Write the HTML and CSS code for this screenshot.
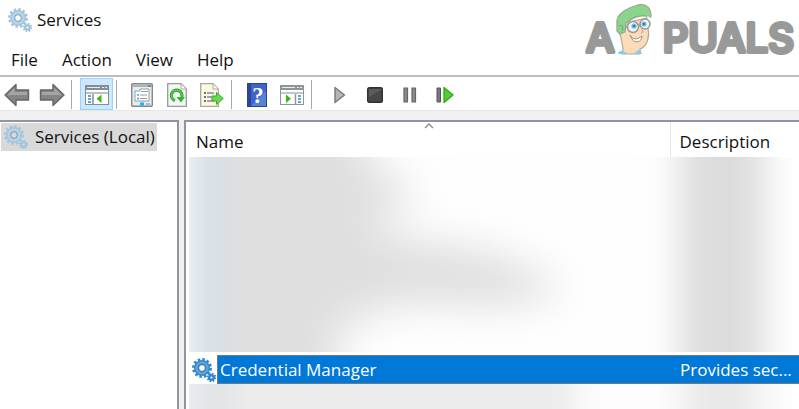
FILE: index.html
```html
<!DOCTYPE html>
<html lang="en">

<head>
    <meta charset="UTF-8">
    <meta name="viewport" content="width=device-width, initial-scale=1">
    <title>Services</title>
    <link rel="stylesheet" href="styles.css">
</head>

<body>
    <svg class="sprite" aria-hidden="true">
        <symbol id="gears" viewBox="0 0 24 24">
            <circle cx="10" cy="10" r="8.500" fill="none" stroke="currentColor" stroke-width="3" stroke-dasharray="2.5 1.95" />
            <circle cx="10" cy="10" r="5.500" fill="none" stroke="currentColor" stroke-width="5" />
            <circle class="gear-shine" cx="10" cy="10" r="5.500" fill="none" stroke-width="2" />
            <circle class="gear-rim" cx="10" cy="10" r="3.200" fill="none" stroke-width="1" />
            <circle cx="19.500" cy="19.500" r="3.800" fill="none" stroke="currentColor" stroke-width="2" stroke-dasharray="1.5 1.48" />
            <circle cx="19.500" cy="19.500" r="2.300" fill="none" stroke="currentColor" stroke-width="2.500" />
        </symbol>
    </svg>

    <div class="window">
        <header class="titlebar">
            <svg class="gears gears-pale" aria-hidden="true"><use href="#gears" /></svg>
            <h1>Services</h1>
            <svg class="watermark" viewBox="0 0 212 62" role="img" aria-label="Appuals">
                <text x="1" y="48">A</text>
                <g transform="translate(30 0)">
                    <path d="M5 29 L8 44 L7 50 H25 L25 45 C31 43 35 35 33 24 L32 14 L10 19 Z" fill="#fbdcb8" stroke="#b4a596" stroke-width="1.2" />
                    <path d="M3 50 C3 48 6 46 8 47 L13 50 Z M18 50 L25 45 L27 50 Z" fill="#86cbe8" />
                    <path d="M2 19 C1 11 10 5 20 2 C28 -1 36 1 36 12 L35 15 L31 12 C25 11 17 14 11 19 L10 28 L5 30 L2 27 Z" fill="#88d58b" stroke="#9aa794" stroke-width="1.3" stroke-linejoin="round" />
                    <path d="M32 12 L36 14 L34 20 Z" fill="#fff" />
                    <path d="M4 22 C7 20 9 23 7 27" fill="none" stroke="#739f75" />
                    <circle cx="18" cy="23" r="5.5" fill="#eef9ff" stroke="#999" stroke-width="1.5" />
                    <circle cx="30" cy="20" r="5" fill="#eef9ff" stroke="#999" stroke-width="1.5" />
                    <path d="M10 23 L13 23 M23 22 L26 21" stroke="#999" stroke-width="1.5" />
                    <circle cx="19" cy="22" r="2.6" fill="#69bce0" />
                    <circle cx="29" cy="20" r="2.6" fill="#69bce0" />
                    <circle cx="19" cy="22" r="1" fill="#556" />
                    <circle cx="29" cy="20" r="1" fill="#556" />
                    <path d="M26 25 C28 27 29 28 26 29" fill="none" stroke="#b99779" />
                    <path d="M15 31 C18 36 22 36 27 32 C27 38 20 40 17 35 Z" fill="#fff" stroke="#a38f82" />
                </g>
                <text x="209" y="48" text-anchor="end">PUALS</text>
            </svg>
        </header>

        <nav class="menubar" aria-label="Menu">
            <button type="button">File</button>
            <button type="button">Action</button>
            <button type="button">View</button>
            <button type="button">Help</button>
        </nav>

        <div class="toolbar" role="toolbar" aria-label="Tools">
            <button type="button" aria-label="Back">
                <svg width="26" height="24" viewBox="0 0 26 24"><path d="M1 12 L12 1.500 V7 H24.500 V17 H12 V22.500 Z" fill="#858585" stroke="#666" stroke-width="1.400" stroke-linejoin="round" /><path d="M3.500 12 L10.500 5 V9 H23 V12 Z" fill="#a5a5a5" /></svg>
            </button>
            <button type="button" aria-label="Forward">
                <svg width="26" height="24" viewBox="0 0 26 24"><path d="M25 12 L14 1.500 V7 H1.500 V17 H14 V22.500 Z" fill="#858585" stroke="#666" stroke-width="1.400" stroke-linejoin="round" /><path d="M22.500 12 L15.500 5 V9 H3 V12 Z" fill="#a5a5a5" /></svg>
            </button>
            <span class="separator"></span>
            <button type="button" class="pressed" aria-label="Show/Hide Console Tree" aria-pressed="true">
                <svg width="24" height="20" viewBox="0 0 24 20"><rect x=".5" y=".5" width="23" height="19" fill="#fff" stroke="#858d96" /><path d="M1 1 H23 V5 H1 Z" fill="#858d96" /><path d="M2 2.500 H15 M17 2.500 H19 M20 2.500 H22" stroke="#e8edf2" /><path d="M1 7 H23 V9 H1 Z" fill="#b9c0c6" /><path d="M8 9 V19" stroke="#858d96" stroke-width="1.500" /><path d="M3 11 H6 M3 14 H6 M3 17 H6" stroke="#3a81c9" stroke-width="1.500" /><path d="M16.500 9.500 V18 L11.500 13.800 Z" fill="#3fb618" /></svg>
            </button>
            <span class="separator"></span>
            <button type="button" aria-label="Properties">
                <svg width="22" height="24" viewBox="0 0 22 24"><rect x=".7" y=".7" width="20.600" height="22.600" rx="1" fill="#e9ecef" stroke="#7f8790" stroke-width="1.400" /><path d="M1 3 H21" stroke="#aab1b9" stroke-width="2" /><path d="M17 3 H20" stroke="#555" /><path d="M4 18 V8 H9 V6 H18 V18 Z" fill="#fff" stroke="#949eaa" /><path d="M10 8.500 H17" stroke="#949eaa" /><path d="M6 12 H8 M6 15.500 H8" stroke="#31a7d8" stroke-width="1.500" /><path d="M9 12 H16 M9 15.500 H16" stroke="#9a9a9a" /><path d="M9 21 H13" stroke="#19b5ef" stroke-width="3" /><path d="M15 21 H19" stroke="#8cc9df" stroke-width="2" /></svg>
            </button>
            <button type="button" aria-label="Refresh">
                <svg width="20" height="24" viewBox="0 0 20 24"><path d="M.7 .7 H14 L19.300 6 V23.300 H.7 Z" fill="#f5f6f7" stroke="#999" stroke-width="1.300" /><path d="M14 1 V6 H19" fill="#fff" stroke="#aaa" /><path d="M8 17.500 A5.300 5.300 0 1 1 14.700 14" fill="none" stroke="#2fa52b" stroke-width="3.200" /><path d="M8 17.500 A5.300 5.300 0 1 1 14.700 14" fill="none" stroke="#57cf4c" stroke-width="1.300" /><path d="M9.500 14 H18 L14 19.500 Z" fill="#35b52d" /></svg>
            </button>
            <button type="button" aria-label="Export List">
                <svg width="24" height="24" viewBox="0 0 24 24"><path d="M.7 .7 H13 L18.300 6 V23.300 H.7 Z" fill="#fcf8df" stroke="#aaa99c" stroke-width="1.300" /><path d="M13 1 V6 H18" fill="#fff" stroke="#aaa99c" /><path d="M4 10 H6 M4 14 H6 M4 18 H6" stroke="#444" stroke-width="1.600" /><path d="M7 10 H14 M7 14 H13 M7 18 H14" stroke="#8b83ad" stroke-width="1.300" /><path d="M12 13 H16.500 V9.500 L23.300 15.500 L16.500 21.500 V18 H12 Z" fill="#67d950" stroke="#39ad2a" /></svg>
            </button>
            <span class="separator"></span>
            <button type="button" aria-label="Help">
                <svg width="20" height="24" viewBox="0 0 20 24"><rect x=".5" y=".5" width="19" height="23" fill="#3f63c9" stroke="#2a4391" /><path d="M1 1 H4 V23 H1 Z" fill="#2b469d" /><path d="M4 23 L19 8 V23 Z" fill="#5681dc" /><text class="help-mark" x="11" y="20" text-anchor="middle">?</text></svg>
            </button>
            <button type="button" aria-label="Show/Hide Action Pane">
                <svg width="24" height="20" viewBox="0 0 24 20"><rect x=".5" y=".5" width="23" height="19" fill="#fff" stroke="#8e959b" /><path d="M1 1 H23 V5 H1 Z" fill="#8e959b" /><path d="M2 2.500 H15 M17 2.500 H19 M20 2.500 H22" stroke="#eee" /><path d="M1 7 H23 V9 H1 Z" fill="#c2c6ca" /><path d="M15.500 9 V19" stroke="#8e959b" stroke-width="1.500" /><path d="M18 11 H21 M18 14 H21 M18 17 H21" stroke="#3a81c9" stroke-width="1.500" /><path d="M6 9.500 V18 L11 13.800 Z" fill="#3fb618" /></svg>
            </button>
            <span class="separator"></span>
            <button type="button" aria-label="Start Service">
                <svg width="12" height="18" viewBox="0 0 12 18"><path d="M1 1.500 L10.500 9 L1 16.500 Z" fill="#b5b5b5" stroke="#777" stroke-width="1.400" stroke-linejoin="round" /></svg>
            </button>
            <button type="button" aria-label="Stop Service">
                <svg width="16" height="16" viewBox="0 0 16 16"><rect x=".7" y=".7" width="14.600" height="14.600" rx="1.500" fill="#484848" stroke="#303030" stroke-width="1.400" /><path d="M2 10 L14 3 V2 H2 Z" fill="#5b5b5b" /></svg>
            </button>
            <button type="button" aria-label="Pause Service">
                <svg width="14" height="16" viewBox="0 0 14 16"><path d="M1 1 H4.500 V15 H1 Z M9 1 H12.500 V15 H9 Z" fill="#8b8b8b" stroke="#666" stroke-width="1.200" /></svg>
            </button>
            <button type="button" aria-label="Restart Service">
                <svg width="18" height="18" viewBox="0 0 18 18"><path d="M1 2 H4.500 V16 H1 Z" fill="#777" stroke="#555" /><path d="M8 1.500 L17 9 L8 16.500 Z" fill="#4fd02b" stroke="#35a51c" stroke-width="1.300" stroke-linejoin="round" /></svg>
            </button>
        </div>

        <div class="panes">
            <aside class="tree">
                <button type="button" class="tree-item">
                    <svg class="gears gears-pale" aria-hidden="true"><use href="#gears" /></svg>
                    Services (Local)
                </button>
            </aside>

            <main class="list">
                <svg class="sort-arrow" viewBox="0 0 10 6" aria-hidden="true"><path d="M1 5 L5 1 L9 5" fill="none" stroke="#8a8a8a" stroke-width="1.300" /></svg>
                <table>
                    <thead>
                        <tr>
                            <th class="col-name" scope="col" aria-sort="ascending">Name</th>
                            <th class="col-description" scope="col">Description</th>
                        </tr>
                    </thead>
                    <tbody>
                        <tr class="hidden-rows">
                            <td colspan="2">
                                <svg class="smudge smudge-top" viewBox="0 0 603 195" preserveAspectRatio="none" aria-hidden="true">
                                    <defs>
                                        <filter id="soft" x="-30%" y="-30%" width="160%" height="160%"><feGaussianBlur stdDeviation="20" /></filter>
                                        <filter id="softer" x="-100%" y="-30%" width="300%" height="160%"><feGaussianBlur stdDeviation="17" /></filter>
                                        <linearGradient id="edge">
                                            <stop offset="0" stop-color="#e9eef1" />
                                            <stop offset=".3" stop-color="#dae2e9" />
                                            <stop offset=".6" stop-color="#d9dfe3" stop-opacity=".9" />
                                            <stop offset="1" stop-color="#dedede" stop-opacity="0" />
                                        </linearGradient>
                                    </defs>
                                    <rect width="603" height="195" fill="#fefefe" />
                                    <path d="M-60 -60 H175 V0 L200 18 L232 45 L180 62 L205 80 L290 92 L350 115 L375 138 L310 150 L215 146 L150 170 L150 260 H-60 Z" fill="#dfdfdf" filter="url(#soft)" />
                                    <rect x="491" y="-80" width="84" height="360" fill="#dcdcdc" filter="url(#softer)" />
                                    <rect width="60" height="195" fill="url(#edge)" />
                                </svg>
                            </td>
                        </tr>
                        <tr class="selected">
                            <td>
                                <div class="service">
                                    <svg class="gears gears-blue" aria-hidden="true"><use href="#gears" /></svg>
                                    <span class="service-name">Credential Manager</span>
                                </div>
                            </td>
                            <td><div class="service-description">Provides sec...</div></td>
                        </tr>
                        <tr class="hidden-rows">
                            <td colspan="2">
                                <svg class="smudge smudge-bottom" viewBox="0 0 603 26" preserveAspectRatio="none" aria-hidden="true">
                                    <rect width="603" height="26" fill="#fdfdfd" />
                                    <rect x="-60" y="-60" width="446" height="150" fill="#ebebeb" filter="url(#softer)" />
                                    <rect x="495" y="-60" width="75" height="150" fill="#e8e8e8" filter="url(#softer)" />
                                    <rect width="60" height="26" fill="url(#edge)" opacity=".5" />
                                </svg>
                            </td>
                        </tr>
                    </tbody>
                </table>
            </main>
        </div>
    </div>
</body>

</html>
```
FILE: styles.css
```css
:root {
    --text: #111;
    --face: #f0f0f0;
    --line: #8f949e;
    --accent: #0078d7;
}

* {
    box-sizing: border-box;
}

body {
    margin: 0;
    background-color: #fff;
    color: var(--text);
    font-family: 'Open Sans', 'Noto Sans', sans-serif;
    font-size: 17px;
    line-height: 24px;
}

button {
    padding: 0;
    border: none;
    background: none;
    color: inherit;
    font: inherit;
}

.sprite {
    position: absolute;
    width: 0;
    height: 0;
}

.window {
    display: flex;
    flex-direction: column;
    height: 100vh;
    overflow: hidden;
}

/* gear icons */
.gears {
    flex: none;
    width: 24px;
    height: 24px;
}

.gears-pale {
    color: #a3c6dc;
}

.gears-blue {
    color: #3489cb;
}

.gear-shine {
    stroke: rgba(255, 255, 255, 0.25);
}

.gear-rim {
    stroke: rgba(40, 80, 120, 0.35);
}

/* title and menu */
.titlebar {
    position: relative;
    display: flex;
    align-items: center;
    gap: 5px;
    padding: 6px 8px 4px;
}

h1 {
    margin: 0;
    font-size: 17px;
    font-weight: 400;
    line-height: 28px;
}

.watermark {
    position: absolute;
    top: 4px;
    right: 2px;
    width: 212px;
    height: 62px;
}

.watermark text {
    fill: #999;
    stroke: #999;
    stroke-width: 4px;
    stroke-linejoin: round;
    font-family: Inter, sans-serif;
    font-size: 40px;
    font-weight: 500;
}

.menubar {
    display: flex;
    align-items: flex-start;
    gap: 24px;
    height: 39px;
    padding: 10px 11px 0;
    border-bottom: 2px solid #bcbcbf;
}

/* toolbar */
.toolbar {
    display: flex;
    gap: 2px;
    height: 34px;
    padding-top: 1px;
    border-bottom: 1px solid #e6e6e6;
}

.toolbar button {
    display: flex;
    align-items: center;
    justify-content: center;
    width: 33px;
    padding-top: 1px;
}

.toolbar .pressed {
    background-color: #cce8ff;
    border: 1px solid #99d1ff;
}

.separator {
    width: 1px;
    margin: 2px 6px 1px 1px;
    background-color: #aaa;
}

.separator:last-of-type {
    margin-right: 9px;
}

.help-mark {
    fill: #fff;
    font-family: 'Liberation Serif', serif;
    font-size: 23px;
    font-weight: 700;
}

/* panes */
.panes {
    display: flex;
    flex: 1;
    gap: 5px;
    min-height: 0;
    padding-top: 9px;
    background-color: var(--face);
}

.tree {
    flex: none;
    width: 179px;
    padding: 1px;
    background-color: #fff;
    border-top: 2px solid var(--line);
    border-right: 2px solid var(--line);
}

.tree-item {
    display: flex;
    align-items: center;
    gap: 7px;
    height: 28px;
    padding: 0 2px 0 3px;
    background-color: #d9d9d9;
}

.list {
    position: relative;
    flex: 1;
    min-width: 0;
    background-color: #fff;
    border-top: 2px solid var(--line);
    border-left: 2px solid var(--line);
}

.sort-arrow {
    position: absolute;
    top: 1px;
    left: 238px;
    width: 10px;
    height: 6px;
}

table {
    width: 100%;
    table-layout: fixed;
    border-collapse: collapse;
}

th {
    height: 35px;
    padding: 5px 10px 0;
    font-weight: 400;
    text-align: left;
}

.col-description {
    width: 129px;
    padding-left: 9px;
    border-left: 1px solid #e5e5e5;
}

td {
    padding: 0;
}

.hidden-rows td {
    padding: 0 7px 0 3px;
}

.smudge {
    display: block;
    width: 100%;
}

.smudge-top {
    height: 195px;
    margin-bottom: 3px;
}

.smudge-bottom {
    height: 26px;
}

.service {
    display: flex;
    align-items: center;
    gap: 1px;
    padding-left: 6px;
}

.service-name,
.service-description {
    height: 29px;
    background-color: var(--accent);
    border: 1px solid #77787c;
    color: #fff;
    line-height: 27px;
    white-space: nowrap;
}

.service-name {
    flex: 1;
    padding-left: 2px;
    border-right: none;
}

.service-description {
    padding-left: 10px;
    border-width: 1px 0;
}
```
